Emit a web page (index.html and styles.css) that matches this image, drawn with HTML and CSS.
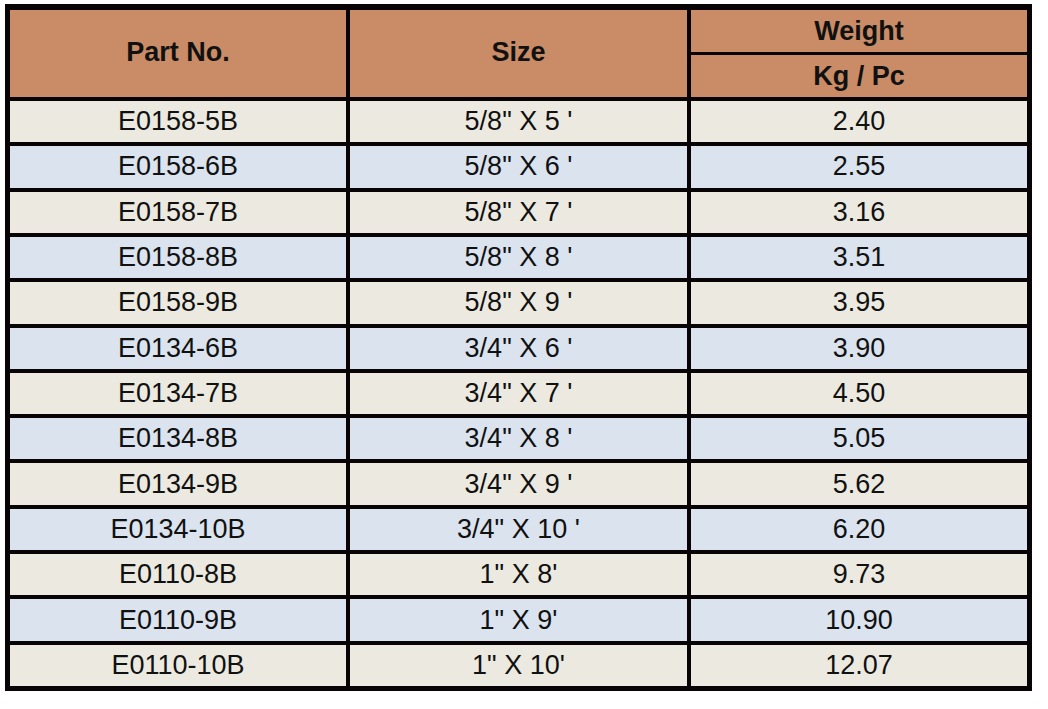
FILE: index.html
```html
<!DOCTYPE html>
<html>
<head>
<meta charset="utf-8">
<link rel="stylesheet" href="styles.css">
</head>
<body>
<div class="sheet">
  <div class="head">
    <div class="hcell tall">Part No.</div>
    <div class="hcell tall">Size</div>
    <div class="hcell">Weight</div>
    <div class="hcell">Kg / Pc</div>
  </div>
  <div class="body">
    <div class="cell odd">E0158-5B</div><div class="cell odd">5/8" X 5 '</div><div class="cell odd">2.40</div>
    <div class="cell even">E0158-6B</div><div class="cell even">5/8" X 6 '</div><div class="cell even">2.55</div>
    <div class="cell odd">E0158-7B</div><div class="cell odd">5/8" X 7 '</div><div class="cell odd">3.16</div>
    <div class="cell even">E0158-8B</div><div class="cell even">5/8" X 8 '</div><div class="cell even">3.51</div>
    <div class="cell odd">E0158-9B</div><div class="cell odd">5/8" X 9 '</div><div class="cell odd">3.95</div>
    <div class="cell even">E0134-6B</div><div class="cell even">3/4" X 6 '</div><div class="cell even">3.90</div>
    <div class="cell odd">E0134-7B</div><div class="cell odd">3/4" X 7 '</div><div class="cell odd">4.50</div>
    <div class="cell even">E0134-8B</div><div class="cell even">3/4" X 8 '</div><div class="cell even">5.05</div>
    <div class="cell odd">E0134-9B</div><div class="cell odd">3/4" X 9 '</div><div class="cell odd">5.62</div>
    <div class="cell even">E0134-10B</div><div class="cell even">3/4" X 10 '</div><div class="cell even">6.20</div>
    <div class="cell odd">E0110-8B</div><div class="cell odd">1" X 8'</div><div class="cell odd">9.73</div>
    <div class="cell even">E0110-9B</div><div class="cell even">1" X 9'</div><div class="cell even">10.90</div>
    <div class="cell odd">E0110-10B</div><div class="cell odd">1" X 10'</div><div class="cell odd">12.07</div>
  </div>
</div>
</body>
</html>
```

FILE: styles.css
```css
html, body {
  margin: 0;
  padding: 0;
  background: #ffffff;
}
body {
  font-family: "Liberation Sans", Arial, sans-serif;
  color: #111111;
}
.sheet {
  margin: 4px 0 0 5px;
  width: 1027px;
  box-sizing: border-box;
  background: #080405;
  padding: 6px 5px 5px 5px;
  display: flex;
  flex-direction: column;
  gap: 4px;
}
.head {
  display: grid;
  grid-template-columns: 336px 337px 336px;
  grid-template-rows: 42px 42px;
  column-gap: 4px;
  row-gap: 3px;
  grid-auto-flow: column;
}
.hcell {
  background: #c98c66;
  font-weight: bold;
  font-size: 27px;
  display: flex;
  align-items: center;
  justify-content: center;
  grid-column: 3;
}
.hcell.tall {
  grid-row: 1 / span 2;
  grid-column: auto;
  padding-bottom: 3px;
}
.hcell.tall:nth-child(1) { grid-column: 1; }
.hcell.tall:nth-child(2) { grid-column: 2; }
.body {
  display: grid;
  grid-template-columns: 336px 337px 336px;
  grid-auto-rows: 1fr;
  height: 585px;
  column-gap: 4px;
  row-gap: 4px;
}
.cell {
  font-size: 27px;
  display: flex;
  align-items: center;
  justify-content: center;
}
.odd { background: #eceae0; }
.even { background: #dae3ee; }
```
